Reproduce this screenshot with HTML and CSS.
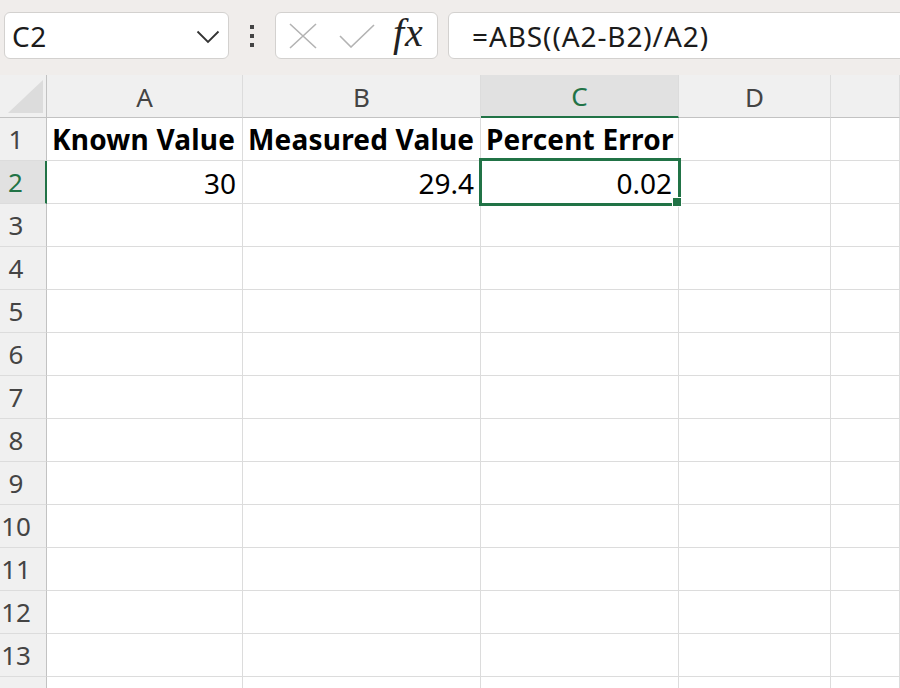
FILE: index.html
```html
<!DOCTYPE html>
<html>
<head>
<meta charset="utf-8">
<link rel="stylesheet" href="styles.css">
</head>
<body>
<div class="app">
  <div class="topbar">
    <div class="namebox">
      <span class="name">C2</span>
      <svg class="chev" width="24" height="14" viewBox="0 0 24 14"><path d="M1.5 1.5 L12 12 L22.5 1.5" fill="none" stroke="#333" stroke-width="1.8"/></svg>
    </div>
    <div class="dots"><i></i><i></i><i></i></div>
    <div class="fbtns">
      <svg class="xicon" width="28" height="26" viewBox="0 0 28 26"><path d="M1 1 L27 25 M27 1 L1 25" stroke="#b3b3b3" stroke-width="1.6" fill="none"/></svg>
      <svg class="check" width="36" height="24" viewBox="0 0 36 24"><path d="M1 12 L12 23 L35 1" stroke="#b3b3b3" stroke-width="1.6" fill="none"/></svg>
      <span class="fx">fx</span>
    </div>
    <div class="formula">=ABS((A2-B2)/A2)</div>
  </div>
  <div class="grid">
    <div class="corner"><div class="tri"></div></div>
    <div class="ch">A</div>
    <div class="ch">B</div>
    <div class="ch sel">C</div>
    <div class="ch">D</div>
    <div class="ch"></div>

    <div class="rh">1</div>
    <div class="c b">Known Value</div>
    <div class="c b">Measured Value</div>
    <div class="c b">Percent Error</div>
    <div class="c"></div>
    <div class="c"></div>

    <div class="rh sel">2</div>
    <div class="c n">30</div>
    <div class="c n">29.4</div>
    <div class="c n active">0.02<span class="handle"></span></div>
    <div class="c"></div>
    <div class="c"></div>

    <div class="rh">3</div><div class="c"></div><div class="c"></div><div class="c"></div><div class="c"></div><div class="c"></div>
    <div class="rh">4</div><div class="c"></div><div class="c"></div><div class="c"></div><div class="c"></div><div class="c"></div>
    <div class="rh">5</div><div class="c"></div><div class="c"></div><div class="c"></div><div class="c"></div><div class="c"></div>
    <div class="rh">6</div><div class="c"></div><div class="c"></div><div class="c"></div><div class="c"></div><div class="c"></div>
    <div class="rh">7</div><div class="c"></div><div class="c"></div><div class="c"></div><div class="c"></div><div class="c"></div>
    <div class="rh">8</div><div class="c"></div><div class="c"></div><div class="c"></div><div class="c"></div><div class="c"></div>
    <div class="rh">9</div><div class="c"></div><div class="c"></div><div class="c"></div><div class="c"></div><div class="c"></div>
    <div class="rh">10</div><div class="c"></div><div class="c"></div><div class="c"></div><div class="c"></div><div class="c"></div>
    <div class="rh">11</div><div class="c"></div><div class="c"></div><div class="c"></div><div class="c"></div><div class="c"></div>
    <div class="rh">12</div><div class="c"></div><div class="c"></div><div class="c"></div><div class="c"></div><div class="c"></div>
    <div class="rh">13</div><div class="c"></div><div class="c"></div><div class="c"></div><div class="c"></div><div class="c"></div>
    <div class="rh"></div><div class="c"></div><div class="c"></div><div class="c"></div><div class="c"></div><div class="c"></div>
  </div>
</div>
</body>
</html>
```
FILE: styles.css
```css
html, body {
  margin: 0;
  padding: 0;
  background: #ffffff;
}
.app {
  width: 900px;
  height: 688px;
  overflow: hidden;
  font-family: "Noto Sans", "Open Sans", sans-serif;
}
.topbar {
  height: 75px;
  background: #f0edeb;
  display: flex;
  align-items: flex-start;
  padding: 12px 0 0 4px;
  box-sizing: border-box;
}
.namebox {
  width: 225px;
  height: 47px;
  box-sizing: border-box;
  background: #fff;
  border: 1px solid #d3d1cf;
  border-radius: 6px;
  display: flex;
  align-items: center;
  justify-content: space-between;
  padding: 0 8px 0 7px;
}
.name {
  font-size: 28px;
  color: #1b1b1b;
  line-height: 1;
  letter-spacing: 0.5px;
}
.chev {
  margin-top: 2px;
}
.dots {
  width: 46px;
  height: 47px;
  display: flex;
  flex-direction: column;
  align-items: center;
  justify-content: center;
  gap: 5px;
}
.dots i {
  display: block;
  width: 4px;
  height: 4px;
  background: #444;
}
.fbtns {
  width: 163px;
  height: 47px;
  box-sizing: border-box;
  background: #fff;
  border: 1px solid #d3d1cf;
  border-radius: 6px;
  display: flex;
  align-items: center;
  padding-left: 13px;
}
.xicon { margin-right: 22px; }
.check { margin-right: 18px; margin-top: 1px; }
.fx {
  font-family: "Liberation Serif", "DejaVu Serif", serif;
  font-style: italic;
  font-size: 40px;
  color: #222;
  line-height: 1;
  margin-top: -5px;
  letter-spacing: 1px;
}
.formula {
  flex: 1;
  margin-left: 10px;
  margin-right: -10px;
  height: 47px;
  box-sizing: border-box;
  background: #fff;
  border: 1px solid #d3d1cf;
  border-radius: 6px 0 0 6px;
  padding-left: 23px;
  display: flex;
  align-items: center;
  font-size: 28px;
  letter-spacing: 0.9px;
  color: #1b1b1b;
}
.grid {
  display: grid;
  grid-template-columns: 47px 196px 238px 198px 152px 1fr;
  grid-auto-rows: 43px;
  font-size: 25px;
}
.grid > div {
  box-sizing: border-box;
  border-right: 1px solid #dcdcdc;
  border-bottom: 1px solid #dcdcdc;
}
.corner {
  background: #f0f0f0;
  position: relative;
  border-right-color: #c2c2c2 !important;
  border-bottom-color: #c2c2c2 !important;
}
.tri {
  position: absolute;
  right: 3px;
  bottom: 4px;
  width: 0;
  height: 0;
  border-left: 35px solid transparent;
  border-bottom: 33px solid #dcdcdc;
}
.ch {
  background: #f0f0f0;
  color: #444;
  display: flex;
  align-items: center;
  justify-content: center;
  border-bottom-color: #c2c2c2 !important;
  padding-top: 1px;
  font-size: 26px;
}
.ch.sel {
  background: #e1e1e1;
  color: #217346;
  border-bottom: 2px solid #217346 !important;
}
.rh {
  background: #f0f0f0;
  color: #444;
  display: flex;
  align-items: center;
  justify-content: center;
  padding-right: 14px;
  border-right-color: #c2c2c2 !important;
  font-size: 26px;
}
.rh.sel {
  background: #e1e1e1;
  color: #217346;
  border-right: 2px solid #217346 !important;
}
.c {
  display: flex;
  align-items: center;
  padding: 0 5px;
  color: #000;
  white-space: nowrap;
  font-size: 28px;
}
.c.b {
  font-weight: 700;
  letter-spacing: 0.2px;
}
.c.n {
  justify-content: flex-end;
  padding-right: 6px;
  padding-top: 2px;
}
.c.active {
  position: relative;
}
.c.active::after {
  content: "";
  position: absolute;
  left: -2px;
  top: -3px;
  right: -3px;
  bottom: -3px;
  border: 3px solid #217346;
}
.handle {
  position: absolute;
  right: -4px;
  bottom: -4px;
  width: 8px;
  height: 8px;
  background: #217346;
  border: 1px solid #fff;
  z-index: 2;
}
```
